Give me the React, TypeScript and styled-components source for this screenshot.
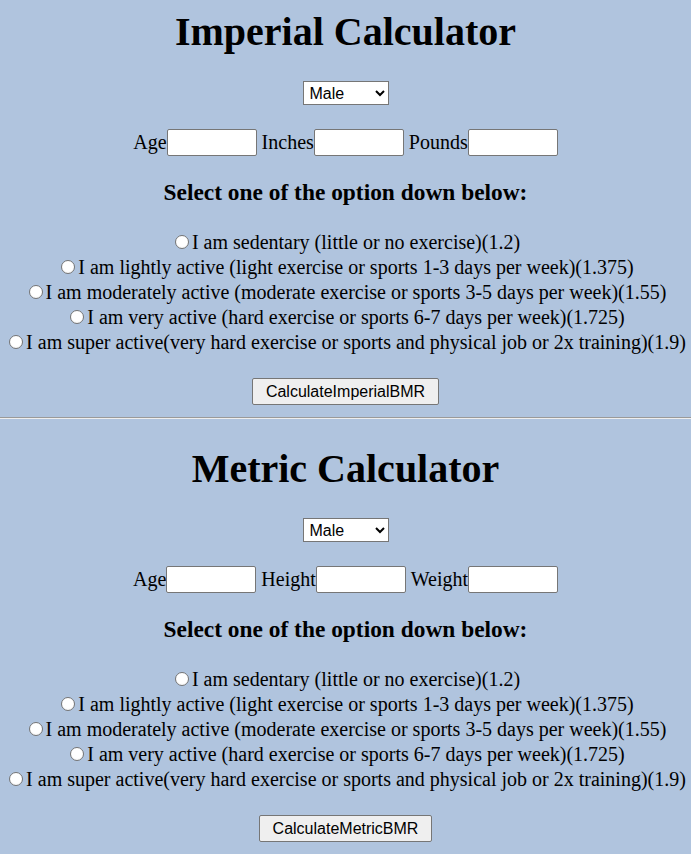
import React from "react";
import styled, { createGlobalStyle } from "styled-components";

const GlobalStyle = createGlobalStyle`
  html, body {
    margin: 0;
    padding: 0;
    background: #b0c4de;
  }
  body {
    font-family: "Liberation Serif", "Times New Roman", serif;
    font-size: 20px;
    color: #000;
  }
`;

const Page = styled.main`
  text-align: center;
`;

const Section = styled.section`
  padding-top: 8px;
`;

const Title = styled.h1`
  margin: 0;
  font-size: 40px;
  font-weight: bold;
  line-height: normal;
`;

const GenderSelect = styled.select`
  display: block;
  margin: 26px auto 0;
  width: 86px;
  height: 24px;
  font-family: "Liberation Sans", Arial, sans-serif;
  font-size: 16px;
  background: #fff;
  border: 1px solid #767676;
  color: #000;
  padding: 0 0 0 2px;
  box-sizing: border-box;
`;

const FieldRow = styled.div`
  margin-top: 24px;
  display: flex;
  justify-content: center;
  align-items: center;
  height: 27px;
`;

const Field = styled.label`
  display: inline-flex;
  align-items: center;
  & + & {
    margin-left: 5px;
  }
`;

const NumberInput = styled.input`
  width: 90px;
  height: 27px;
  box-sizing: border-box;
  border: 1px solid #767676;
  border-radius: 2px;
  background: #fff;
  padding: 1px 2px;
  margin: 0;
  font-family: "Liberation Sans", Arial, sans-serif;
  font-size: 13px;
`;

const Subtitle = styled.h3`
  margin: 23px 0 0;
  font-size: 23.4px;
  font-weight: bold;
  line-height: normal;
`;

const Options = styled.div`
  margin-top: 24px;
`;

const OptionRow = styled.label`
  display: block;
  line-height: 25px;
  white-space: nowrap;
`;

const Radio = styled.input`
  appearance: none;
  -webkit-appearance: none;
  display: inline-block;
  box-sizing: border-box;
  width: 14px;
  height: 14px;
  margin: 3px 3px 0 4px;
  border: 1px solid #767676;
  border-radius: 50%;
  background: radial-gradient(circle at 50% 40%, #ffffff 55%, #ececec 100%);
  vertical-align: baseline;
`;

const SubmitButton = styled.button`
  display: block;
  margin: 23px auto 0;
  height: 27px;
  padding: 0 12.5px;
  font-family: "Liberation Sans", Arial, sans-serif;
  font-size: 16px;
  color: #000;
  background: #efefef;
  border: 1px solid #767676;
  border-radius: 2px;
  box-sizing: border-box;
`;

const Divider = styled.hr`
  margin: 12px 0 18px;
  border: 0;
  border-top: 1px solid #9a9a9a;
  border-bottom: 1px solid #eeeeee;
  height: 0;
`;

const activities = [
  "I am sedentary (little or no exercise)(1.2)",
  "I am lightly active (light exercise or sports 1-3 days per week)(1.375)",
  "I am moderately active (moderate exercise or sports 3-5 days per week)(1.55)",
  "I am very active (hard exercise or sports 6-7 days per week)(1.725)",
  "I am super active(very hard exercise or sports and physical job or 2x training)(1.9)",
];

type CalcProps = {
  id: string;
  title: string;
  fields: string[];
  button: string;
};

function Calculator({ id, title, fields, button }: CalcProps) {
  return (
    <Section>
      <Title>{title}</Title>
      <GenderSelect defaultValue="Male">
        <option>Male</option>
        <option>Female</option>
      </GenderSelect>
      <FieldRow>
        {fields.map((f) => (
          <Field key={f}>
            {f}
            <NumberInput type="text" />
          </Field>
        ))}
      </FieldRow>
      <Subtitle>Select one of the option down below:</Subtitle>
      <Options>
        {activities.map((a) => (
          <OptionRow key={a}>
            <Radio type="radio" name={id} />
            {a}
          </OptionRow>
        ))}
      </Options>
      <SubmitButton type="button">{button}</SubmitButton>
      <Divider />
    </Section>
  );
}

export default function App() {
  return (
    <Page>
      <GlobalStyle />
      <Calculator
        id="imperial"
        title="Imperial Calculator"
        fields={["Age", "Inches", "Pounds"]}
        button="CalculateImperialBMR"
      />
      <Calculator
        id="metric"
        title="Metric Calculator"
        fields={["Age", "Height", "Weight"]}
        button="CalculateMetricBMR"
      />
    </Page>
  );
}
